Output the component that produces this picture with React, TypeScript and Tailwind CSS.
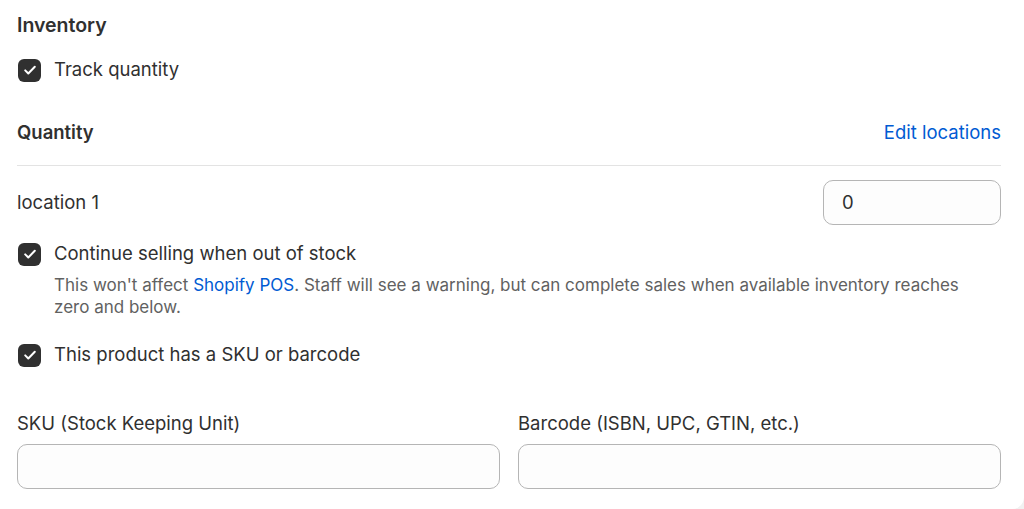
import React from 'react';

const Checkbox = ({ label }: { label: string }) => (
  <label className="flex items-center gap-[13px] h-[24px]">
    <span className="flex items-center justify-center w-[23px] h-[23px] rounded-[6px] bg-[#303030] ml-[1px]">
      <svg viewBox="0 0 20 20" className="w-[20px] h-[20px]" fill="none">
        <path d="M5.2 10.4l3.1 3.1L14.8 6.8" stroke="#fff" strokeWidth={2} strokeLinecap="round" strokeLinejoin="round" />
      </svg>
    </span>
    <span className="text-[18.5px] text-[#303030]">{label}</span>
  </label>
);

const TextInput = ({ value = '' }: { value?: string }) => (
  <div className="h-[45px] w-full rounded-[10px] border border-[#b5b5b5] bg-[#fdfdfd] flex items-center pl-[18px] text-[18.5px] text-[#303030]">
    {value}
  </div>
);

export default function App() {
  return (
    <div className="bg-[#f1f1f1] min-h-[509px]" style={{ fontFamily: 'Inter, "Noto Sans", sans-serif' }}>
      <div className="bg-white h-[509px] rounded-br-[12px] pl-[17px] pr-[23px] pt-[13px] text-[#303030]">
        {/* Inventory */}
        <h2 className="text-[19.5px] leading-[24px] font-semibold">Inventory</h2>
        <div className="mt-[21px]">
          <Checkbox label="Track quantity" />
        </div>

        {/* Quantity */}
        <div className="mt-[39px] flex items-center justify-between h-[24px]">
          <span className="text-[18.5px] font-semibold">Quantity</span>
          <a className="text-[18.5px] text-[#005bd3]" href="#">Edit locations</a>
        </div>
        <div className="mt-[20px] border-t border-[#e3e3e3]" />

        <div className="mt-[14px] flex items-center justify-between">
          <span className="text-[18.5px]">location 1</span>
          <div className="w-[178px]">
            <TextInput value="0" />
          </div>
        </div>

        <div className="mt-[17px]">
          <Checkbox label="Continue selling when out of stock" />
        </div>
        <p className="mt-[8px] pl-[37px] pr-[24px] text-[17px] leading-[22px] text-[#616161]">
          This won't affect <span className="text-[#005bd3]">Shopify POS</span>. Staff will see a warning, but can complete sales when available inventory reaches zero and below.
        </p>

        <div className="mt-[25px]">
          <Checkbox label="This product has a SKU or barcode" />
        </div>

        {/* SKU / Barcode */}
        <div className="mt-[44px] grid grid-cols-2 gap-[18px]">
          <div>
            <div className="text-[18.5px] leading-[24px]">SKU (Stock Keeping Unit)</div>
            <div className="mt-[9px]">
              <TextInput />
            </div>
          </div>
          <div>
            <div className="text-[18.5px] leading-[24px]">Barcode (ISBN, UPC, GTIN, etc.)</div>
            <div className="mt-[9px]">
              <TextInput />
            </div>
          </div>
        </div>
      </div>
    </div>
  );
}
